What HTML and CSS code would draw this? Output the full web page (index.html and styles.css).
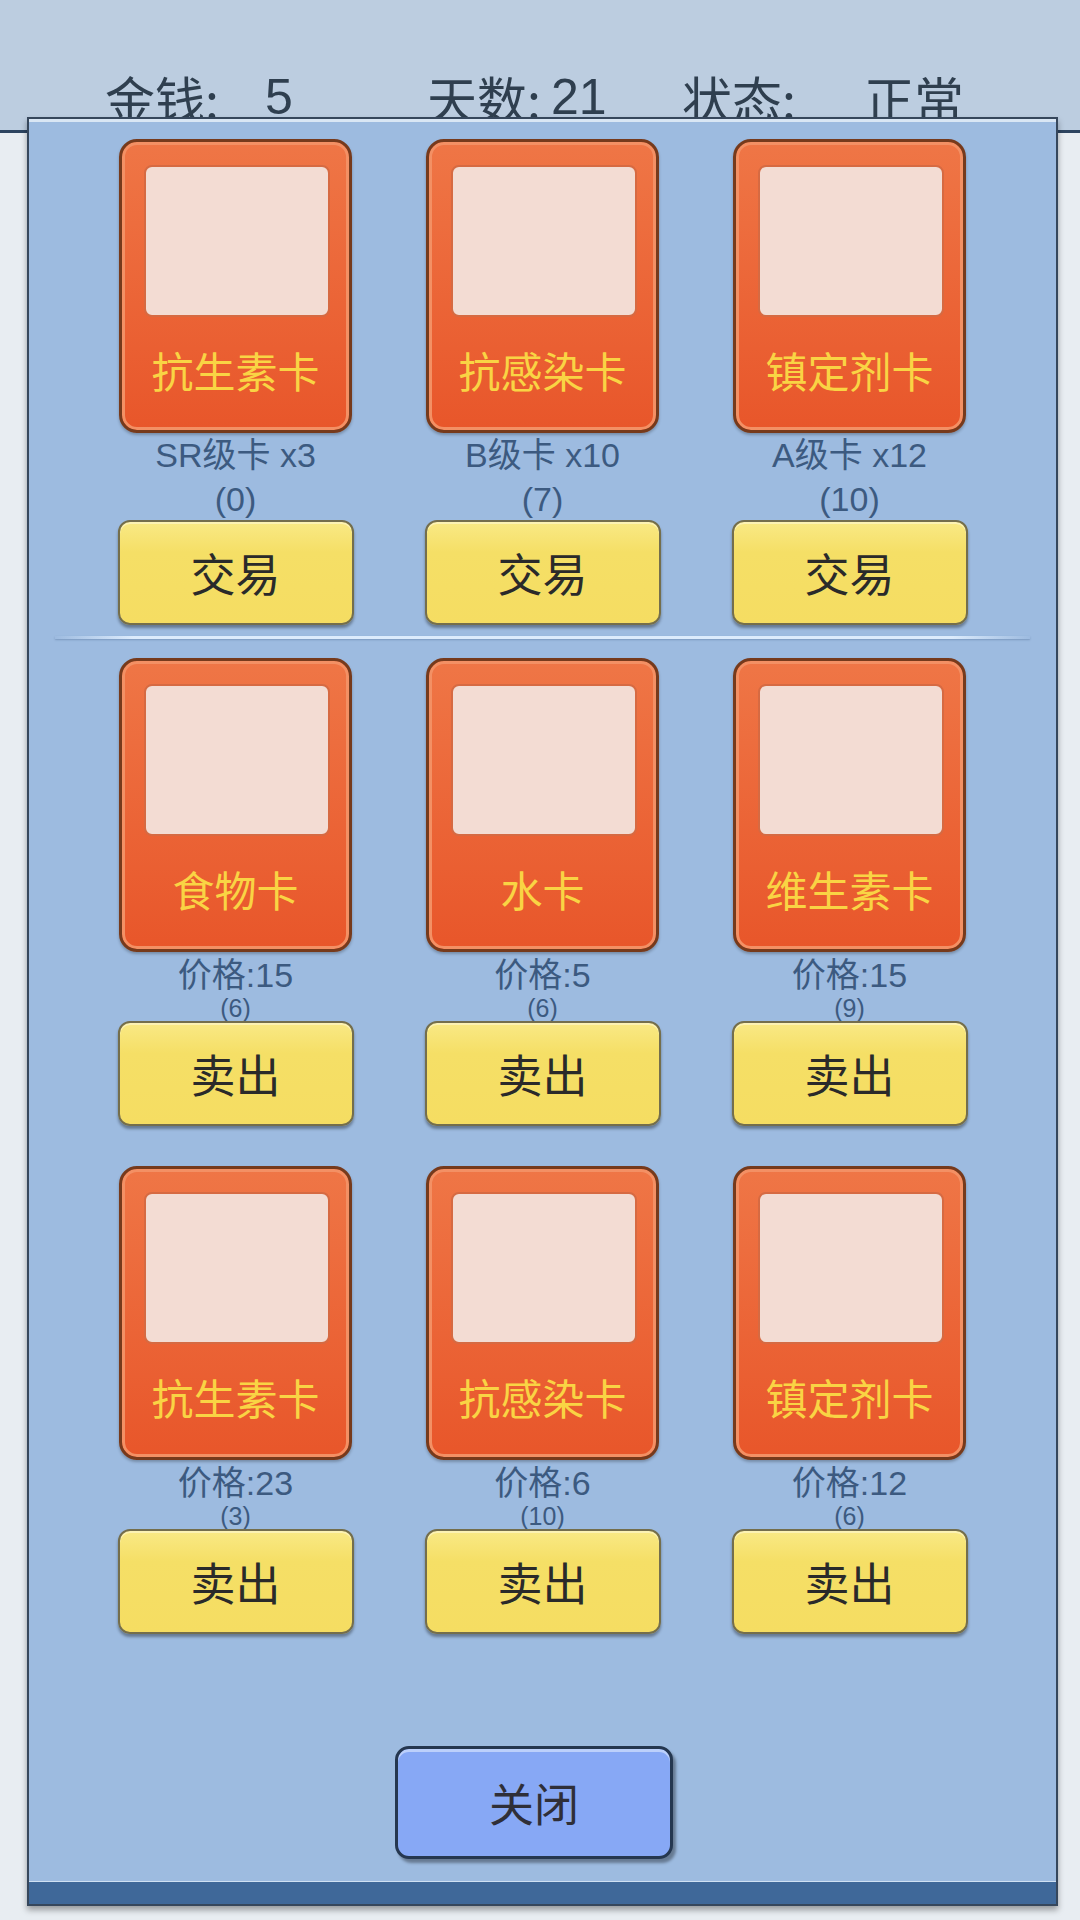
FILE: index.html
```html
<!DOCTYPE html>
<html lang="zh">
<head>
  <meta charset="UTF-8" />
  <meta name="viewport" content="width=device-width, initial-scale=1.0"/>
  <title>商店</title>
  <link rel="stylesheet" href="styles.css">
</head>
<body>
  <header class="top-bar">
    <div class="stat stat-money"><span class="stat-label">金钱:</span><span class="stat-value">5</span></div>
    <div class="stat stat-day"><span class="stat-label">天数:</span><span class="stat-value">21</span></div>
    <div class="stat stat-state"><span class="stat-label">状态:</span><span class="stat-value">正常</span></div>
  </header>

  <div class="panel">
    <div class="shop-row trade-row">
      <div class="cell">
        <div class="card"><div class="card-pic"></div><div class="card-name">抗生素卡</div></div>
        <div class="info"><div class="info-main">SR级卡 x3</div><div class="info-sub">(0)</div></div>
        <button class="btn">交易</button>
      </div>
      <div class="cell">
        <div class="card"><div class="card-pic"></div><div class="card-name">抗感染卡</div></div>
        <div class="info"><div class="info-main">B级卡 x10</div><div class="info-sub">(7)</div></div>
        <button class="btn">交易</button>
      </div>
      <div class="cell">
        <div class="card"><div class="card-pic"></div><div class="card-name">镇定剂卡</div></div>
        <div class="info"><div class="info-main">A级卡 x12</div><div class="info-sub">(10)</div></div>
        <button class="btn">交易</button>
      </div>
    </div>

    <div class="divider"></div>

    <div class="shop-row sell-row">
      <div class="cell">
        <div class="card"><div class="card-pic"></div><div class="card-name">食物卡</div></div>
        <div class="info"><div class="info-main">价格:15</div><div class="info-sub">(6)</div></div>
        <button class="btn">卖出</button>
      </div>
      <div class="cell">
        <div class="card"><div class="card-pic"></div><div class="card-name">水卡</div></div>
        <div class="info"><div class="info-main">价格:5</div><div class="info-sub">(6)</div></div>
        <button class="btn">卖出</button>
      </div>
      <div class="cell">
        <div class="card"><div class="card-pic"></div><div class="card-name">维生素卡</div></div>
        <div class="info"><div class="info-main">价格:15</div><div class="info-sub">(9)</div></div>
        <button class="btn">卖出</button>
      </div>
    </div>

    <div class="shop-row sell-row">
      <div class="cell">
        <div class="card"><div class="card-pic"></div><div class="card-name">抗生素卡</div></div>
        <div class="info"><div class="info-main">价格:23</div><div class="info-sub">(3)</div></div>
        <button class="btn">卖出</button>
      </div>
      <div class="cell">
        <div class="card"><div class="card-pic"></div><div class="card-name">抗感染卡</div></div>
        <div class="info"><div class="info-main">价格:6</div><div class="info-sub">(10)</div></div>
        <button class="btn">卖出</button>
      </div>
      <div class="cell">
        <div class="card"><div class="card-pic"></div><div class="card-name">镇定剂卡</div></div>
        <div class="info"><div class="info-main">价格:12</div><div class="info-sub">(6)</div></div>
        <button class="btn">卖出</button>
      </div>
    </div>

    <div class="panel-foot">
      <button class="close-btn">关闭</button>
    </div>
    <div class="panel-bar"></div>
  </div>
</body>
</html>
```

FILE: styles.css
```css
body {
  margin: 0;
  width: 1080px;
  height: 1920px;
  overflow: hidden;
  position: relative;
  background-color: #e8edf2;
  font-family: 'Liberation Sans', 'Noto Sans CJK SC', sans-serif;
  color: #333;
}

.top-bar {
  height: 133px;
  box-sizing: border-box;
  padding: 72px 0 0 105px;
  background-color: #bccde0;
  border-bottom: 3px solid #2d4460;
  display: flex;
  font-family: 'Noto Sans CJK SC', sans-serif;
  font-size: 50px;
  line-height: 1;
  color: #2f3f4f;
}

.stat {
  display: flex;
}

.stat-value {
  font-family: 'Liberation Sans', sans-serif;
}

.stat-state .stat-value {
  font-family: 'Noto Sans CJK SC', sans-serif;
}

.stat-money { width: 322px; }
.stat-money .stat-label { width: 160px; }
.stat-day { width: 255px; }
.stat-day .stat-label { width: 124px; }
.stat-state .stat-label { width: 182px; }

.panel {
  position: absolute;
  left: 27px;
  top: 117px;
  width: 1031px;
  height: 1789px;
  box-sizing: border-box;
  padding-top: 20px;
  display: flex;
  flex-direction: column;
  background-color: #9dbbe0;
  border: 2px solid #36475c;
  box-shadow: inset 0 3px 0 #d9e6f4, 0 4px 6px rgba(0,0,0,0.35);
}

.shop-row {
  display: grid;
  grid-template-columns: repeat(3, 307px);
  justify-content: center;
}

.sell-row + .sell-row {
  margin-top: 40px;
}

.cell {
  display: flex;
  flex-direction: column;
  align-items: center;
}

.card {
  width: 233px;
  height: 294px;
  box-sizing: border-box;
  padding: 23px 0 0 22px;
  border: 3px solid #763a1c;
  border-radius: 18px;
  background: linear-gradient(#ef7646, #e8562a);
  box-shadow: inset 0 0 0 3px #f39064, 0 2px 3px rgba(0,0,0,0.25);
}

.card-pic {
  width: 186px;
  height: 152px;
  box-sizing: border-box;
  background-color: #f3dcd3;
  border: 2px solid #d66a42;
  border-radius: 8px;
}

.card-name {
  margin: 19px 0 0 -22px;
  text-align: center;
  font-size: 42px;
  line-height: 76px;
  color: #f9d444;
}

.info {
  text-align: center;
  color: #3c5a80;
}

.trade-row .info {
  height: 87px;
  font-size: 34px;
  line-height: 44px;
}

.sell-row .info {
  height: 69px;
  box-sizing: border-box;
  padding-top: 5px;
}

.sell-row .info-main {
  font-size: 34px;
  line-height: 36px;
}

.sell-row .info-sub {
  font-size: 25px;
  line-height: 30px;
}

.btn {
  width: 236px;
  height: 105px;
  padding: 0;
  border: 2px solid #746e4c;
  border-radius: 12px;
  background: linear-gradient(#f9e985, #f5df66 30%, #f5dd62);
  box-shadow: inset 0 2px 0 #fcf2b4, 0 3px 3px rgba(0,0,0,0.35);
  font-family: 'Noto Sans CJK SC', sans-serif;
  font-size: 45px;
  color: #2a2a2a;
}

.divider {
  height: 3px;
  margin: 11px 26px 19px;
  background: linear-gradient(90deg, rgba(220,235,252,0), #dcebfc 8%, #dcebfc 92%, rgba(220,235,252,0));
  box-shadow: 0 1px 2px rgba(70,100,140,0.4);
}

.panel-foot {
  padding: 112px 0 0 366px;
}

.close-btn {
  width: 278px;
  height: 113px;
  padding: 0;
  border: 3px solid #253750;
  border-radius: 14px;
  background-color: #87a8f5;
  box-shadow: inset 0 3px 0 #bcd0fb, 3px 4px 3px rgba(0,0,0,0.35);
  font-family: 'Noto Sans CJK SC', sans-serif;
  font-size: 45px;
  color: #2f2f38;
}

.panel-bar {
  margin-top: auto;
  height: 22px;
  background-color: #3f6899;
  border-top: 1px solid #cfe0f2;
}
```
